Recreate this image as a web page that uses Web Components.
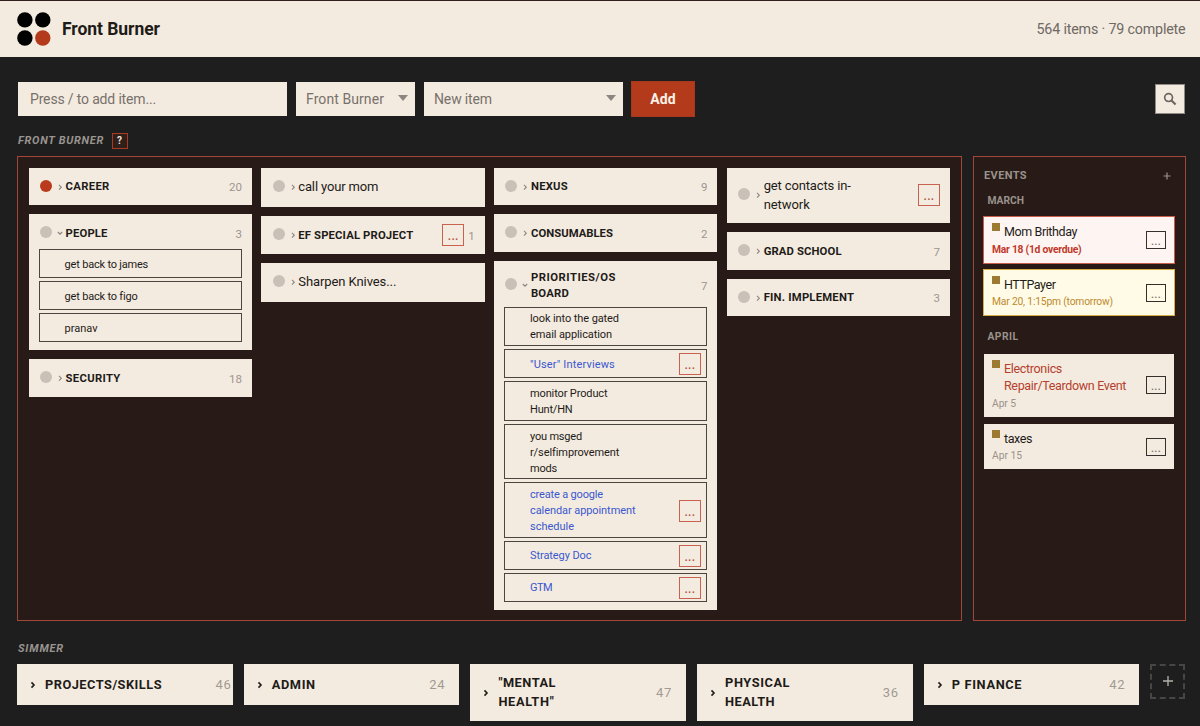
<!DOCTYPE html>
<html lang="en">
<head>
<meta charset="utf-8">
<title>Front Burner</title>
<style>
  body {
    margin: 0;
    height: 726px;
    overflow: hidden;
    background: #1e1e1e;
    color: #1e1b18;
    font-family: Roboto, "Liberation Sans", sans-serif;
    --cream: #f4ebe0;
    --red: #b33b1b;
    --line: #a3463a;
  }
</style>
</head>
<body>
<burner-app></burner-app>

<script>
// Text run tracked out to a given width
class TrackedText extends HTMLElement {
  connectedCallback() {
    if (this.shadowRoot) return;
    this.attachShadow({ mode: 'open' }).innerHTML =
      '<style>:host { display: inline-block; white-space: nowrap; vertical-align: top; }</style><slot></slot>';
    const width = Number(this.getAttribute('w'));
    const count = this.textContent.length;
    const natural = this.getBoundingClientRect().width;
    if (width && natural) {
      this.style.letterSpacing = `${((width - natural) / count).toFixed(3)}px`;
    }
  }
}

class MoreButton extends HTMLElement {
  connectedCallback() {
    this.attachShadow({ mode: 'open' }).innerHTML = `
      <style>
        :host {
          display: block; flex: none; box-sizing: border-box;
          width: 22px; height: 22px; margin: -4px 0 -3px;
          border: 1px solid #c9614f; color: #b5503c;
          font-size: 12px; line-height: 23px; text-align: center;
          font-weight: 500; letter-spacing: 0.3px;
        }
        :host([dark]) {
          width: 20px; height: 18px; border-color: #33302c; color: #77716b;
          line-height: 19px; font-size: 11px;
        }
      </style>...`;
  }
}

class BurnerHeader extends HTMLElement {
  connectedCallback() {
    this.attachShadow({ mode: 'open' }).innerHTML = `
      <style>
        :host {
          display: flex; align-items: center; box-sizing: border-box; height: 57px;
          padding: 0 14.5px 0 17px; background: var(--cream);
          border-top: 1px solid #32201f;
        }
        svg { display: block; width: 34px; height: 34px; }
        h1 { flex: 1; margin: 0 0 0 11px; font-size: 17.5px; line-height: 22px; font-weight: 700; }
        .stats { font-size: 14.3px; line-height: 20px; color: #6d6964; }
      </style>
      <svg viewBox="0 0 34 34">
        <circle cx="7.9" cy="7.9" r="7.7"/><circle cx="25.8" cy="7.9" r="7.7"/>
        <circle cx="7.9" cy="26" r="7.7"/><circle cx="25.8" cy="26" r="7.7" fill="#b33b1b"/>
      </svg>
      <h1><tracked-text w="98">Front Burner</tracked-text></h1>
      <div class="stats"><tracked-text w="149">564 items · 79 complete</tracked-text></div>`;
  }
}

class BurnerToolbar extends HTMLElement {
  connectedCallback() {
    this.attachShadow({ mode: 'open' }).innerHTML = `
      <style>
        :host {
          display: flex; align-items: center; height: 36px; gap: 9px;
          margin: 24px 15px 0 18px; font-size: 14px; line-height: 20px; color: #77716b;
        }
        .field {
          display: flex; align-items: center; justify-content: space-between;
          box-sizing: border-box; height: 34px; padding: 0 7px 0 10px; background: var(--cream);
        }
        .field.entry { width: 269px; padding-left: 12px; }
        .field.zone { width: 119px; }
        .field.kind { width: 199px; }
        .arrow { border: 5px solid transparent; border-top: 6px solid #8b8681; border-bottom: 0; margin-top: -2px; }
        button {
          width: 64px; height: 36px; margin-left: -1px; padding: 0; border: 1px solid #a8381b;
          background: var(--red); color: #fbf1e6; font: inherit; font-weight: 700;
        }
        .search {
          display: grid; place-items: center; box-sizing: border-box;
          width: 30px; height: 30px; margin-left: auto;
          background: var(--cream); border: 1px solid #918b85;
        }
      </style>
      <div class="field entry"><tracked-text w="126">Press / to add item...</tracked-text></div>
      <div class="field zone"><tracked-text w="78">Front Burner</tracked-text><span class="arrow"></span></div>
      <div class="field kind"><tracked-text w="58">New item</tracked-text><span class="arrow"></span></div>
      <button><tracked-text w="25.5">Add</tracked-text></button>
      <div class="search">
        <svg width="14" height="14" viewBox="0 0 14 14" fill="none" stroke="#6b6661">
          <circle cx="5.6" cy="5.6" r="3.9" stroke-width="1.7"/>
          <path d="M8.5 8.5 12.6 12.6" stroke-width="2.1"/>
        </svg>
      </div>`;
  }
}

class SectionLabel extends HTMLElement {
  connectedCallback() {
    this.attachShadow({ mode: 'open' }).innerHTML = `
      <style>
        :host {
          display: flex; align-items: center; gap: 7.5px; height: 16px; margin-left: 18px;
          font-size: 11px; line-height: 16px; font-weight: 700; font-style: italic; color: #99948f;
        }
        .help {
          box-sizing: border-box; width: 16px; height: 16px; border: 1px solid #a93c20;
          background: #30201b; color: #eee4da; font-style: normal; font-size: 10px;
          line-height: 14px; text-align: center;
        }
      </style>
      <slot></slot>${this.hasAttribute('help') ? '<span class="help">?</span>' : ''}`;
  }
}

class BurnerCard extends HTMLElement {
  connectedCallback() {
    const count = this.getAttribute('count') || '';
    const chevron = this.hasAttribute('open') ? 'M0.8 2 3 4.2 5.2 2' : 'M2 0.8 4.3 3.2 2 5.6';
    this.attachShadow({ mode: 'open' }).innerHTML = `
      <style>
        :host { display: block; background: var(--cream); }
        .head {
          display: flex; align-items: center; box-sizing: border-box; min-height: 37.3px;
          padding: 9px 10px 7.3px 11.5px; font-size: 11.3px; line-height: 16px; font-weight: 700;
        }
        :host([task]) .head {
          min-height: 39.3px; padding-top: 9.3px; padding-bottom: 9.3px;
          font-size: 13px; line-height: 18.4px; font-weight: 400;
        }
        .dot { flex: none; width: 12px; height: 12px; margin-top: -3px; border-radius: 50%; background: #c9c1b8; }
        :host([hot]) .dot { background: #b93a1c; }
        svg { flex: none; width: 6px; height: 7px; margin: 0 2.5px 0 5px; fill: none; stroke: #8b8580; stroke-width: 1.1; }
        .title { flex: 1; }
        .count { margin-left: 4px; color: #9c9690; font-size: 11.5px; font-weight: 400; }
        .items { display: flex; flex-direction: column; gap: 3px; margin-top: -2.4px; padding: 0 10px 8px; }
      </style>
      <div class="head">
        <span class="dot"></span>
        <svg viewBox="0 0 6 7"><path d="${chevron}"/></svg>
        <span class="title"><slot name="title"></slot></span>
        <slot name="more"></slot>
        ${count && `<span class="count">${count}</span>`}
      </div>
      ${this.hasAttribute('open') ? '<div class="items"><slot></slot></div>' : ''}`;
  }
}

class BurnerItem extends HTMLElement {
  connectedCallback() {
    this.attachShadow({ mode: 'open' }).innerHTML = `
      <style>
        :host {
          display: flex; align-items: center; justify-content: space-between; box-sizing: border-box;
          min-height: 29px; padding: 3.7px 5.5px 1.9px 25px; border: 1px solid #4b4540;
          font-size: 11px; line-height: 16px;
        }
        :host([link]) { color: #3a58cf; }
      </style>
      <span><slot></slot></span>${this.hasAttribute('more') ? '<more-button></more-button>' : ''}`;
  }
}

class EventCard extends HTMLElement {
  connectedCallback() {
    this.attachShadow({ mode: 'open' }).innerHTML = `
      <style>
        :host {
          display: flex; align-items: center; justify-content: space-between;
          margin-bottom: 7px; padding: 6px 8px 5px; background: var(--cream);
          --date: #99928b;
        }
        :host([state="overdue"]) { background: #fef5f3; box-shadow: 0 0 0 1px #c95d4c; --date: #c0392b; }
        :host([state="soon"]) { background: #fffbe6; box-shadow: 0 0 0 1px #d8ae45; --date: #bd8a2e; }
        :host([accent]) { color: #b5402c; }
        .title { display: flex; font-size: 12.5px; line-height: 17.5px; }
        .title i { width: 8px; height: 8px; margin: 0 4px 0 0; background: #9c7a31; }
        .date { font-size: 10.3px; line-height: 16px; margin-top: 1px; color: var(--date); }
        :host([state="overdue"]) .date { font-weight: 700; }
      </style>
      <div>
        <div class="title"><i></i><span><slot></slot></span></div>
        <div class="date"><slot name="date"></slot></div>
      </div>
      <more-button dark></more-button>`;
  }
}

class EventsPanel extends HTMLElement {
  connectedCallback() {
    this.attachShadow({ mode: 'open' }).innerHTML = `
      <style>
        :host {
          display: block; box-sizing: border-box; padding: 10px 11px 10px 10px;
          border: 1px solid var(--line); background: #281a16;
        }
        header { display: flex; justify-content: space-between; font-size: 11px; line-height: 18px; font-weight: 700; color: #99928c; }
        header svg { margin: 5px 3.5px 0 0; }
      </style>
      <header><tracked-text w="43">EVENTS</tracked-text>
        <svg width="8" height="8" viewBox="0 0 8 8" stroke="#99928c" stroke-width="1.2"><path d="M4 .5v7M.5 4h7"/></svg>
      </header>
      <slot></slot>`;
  }
}

class MonthLabel extends HTMLElement {
  connectedCallback() {
    this.attachShadow({ mode: 'open' }).innerHTML = `
      <style>
        :host { display: block; height: 25.5px; margin-top: 6.5px; padding-left: 3.5px; font-size: 10.3px; line-height: 17px; font-weight: 700; color: #99928c; }
        :host([next]) { margin-top: 13px; }
      </style><slot></slot>`;
  }
}

class SimmerCard extends HTMLElement {
  connectedCallback() {
    this.attachShadow({ mode: 'open' }).innerHTML = `
      <style>
        :host {
          display: flex; align-items: center; box-sizing: border-box; width: 215.6px; min-height: 41px;
          padding: 9.5px 14px 9.5px 13px; background: var(--cream); font-size: 12.8px; line-height: 19px; font-weight: 700;
        }
        :host([tight]) { padding-right: 1px; }
        svg { width: 6px; height: 8px; margin: 1px 9px 0 0; fill: none; stroke: #1e1b18; stroke-width: 1.6; }
        .title { flex: 1; }
        .count { font-size: 13px; font-weight: 400; color: #a19a93; }
      </style>
      <svg viewBox="0 0 6 8"><path d="M1.5 1.4 4 4 1.5 6.6"/></svg>
      <span class="title"><slot></slot></span>
      <span class="count"><tracked-text w="16">${this.getAttribute('count')}</tracked-text></span>`;
  }
}

class BurnerApp extends HTMLElement {
  connectedCallback() {
    this.attachShadow({ mode: 'open' }).innerHTML = `
      <style>
        :host { display: block; }
        .label { margin-top: 16px; }
        .label.low { margin-top: 20.6px; }
        main {
          display: grid; grid-template-columns: 944.5px 213px; grid-template-rows: 464.2px;
          gap: 11.5px; height: 464.2px; margin: 7.4px 0 0 17px;
        }
        .board {
          display: grid; grid-template-columns: repeat(4, 223.4px); gap: 9.3px; align-items: start;
          box-sizing: border-box; padding: 10.6px; border: 1px solid var(--line); background: #281a16;
        }
        .column { display: flex; flex-direction: column; gap: 9.1px; }
        .simmer { display: flex; align-items: flex-start; gap: 11.1px; margin: 6.8px 0 0 17px; }
        .add {
          display: grid; place-items: center; box-sizing: border-box; width: 35px; height: 35px;
          border: 2px dashed #484645;
        }
      </style>
      <burner-header></burner-header>
      <burner-toolbar></burner-toolbar>
      <section-label class="label" help><tracked-text w="86">FRONT BURNER</tracked-text></section-label>
      <main>
        <div class="board">
          <div class="column">
            <burner-card hot count="20"><tracked-text slot="title" w="44">CAREER</tracked-text></burner-card>
            <burner-card open count="3"><tracked-text slot="title" w="42">PEOPLE</tracked-text>
              <burner-item><tracked-text w="83.5">get back to james</tracked-text></burner-item>
              <burner-item><tracked-text w="72.5">get back to figo</tracked-text></burner-item>
              <burner-item><tracked-text w="33">pranav</tracked-text></burner-item>
            </burner-card>
            <burner-card count="18"><tracked-text slot="title" w="55">SECURITY</tracked-text></burner-card>
          </div>
          <div class="column">
            <burner-card task><tracked-text slot="title" w="80">call your mom</tracked-text></burner-card>
            <burner-card count="1"><tracked-text slot="title" w="115">EF SPECIAL PROJECT</tracked-text><more-button slot="more"></more-button></burner-card>
            <burner-card task><tracked-text slot="title" w="98">Sharpen Knives...</tracked-text></burner-card>
          </div>
          <div class="column">
            <burner-card count="9"><tracked-text slot="title" w="37">NEXUS</tracked-text></burner-card>
            <burner-card count="2"><tracked-text slot="title" w="82">CONSUMABLES</tracked-text></burner-card>
            <burner-card open count="7"><span slot="title"><tracked-text w="85">PRIORITIES/OS</tracked-text><br><tracked-text w="38">BOARD</tracked-text></span>
              <burner-item><tracked-text w="89">look into the gated</tracked-text><br><tracked-text w="82">email application</tracked-text></burner-item>
              <burner-item link more><tracked-text w="85">"User" Interviews</tracked-text></burner-item>
              <burner-item><tracked-text w="77.5">monitor Product</tracked-text><br><tracked-text w="42.5">Hunt/HN</tracked-text></burner-item>
              <burner-item><tracked-text w="52">you msged</tracked-text><br><tracked-text w="89">r/selfimprovement</tracked-text><br><tracked-text w="27">mods</tracked-text></burner-item>
              <burner-item link more><tracked-text w="73">create a google</tracked-text><br><tracked-text w="105.5">calendar appointment</tracked-text><br><tracked-text w="44">schedule</tracked-text></burner-item>
              <burner-item link more><tracked-text w="61.5">Strategy Doc</tracked-text></burner-item>
              <burner-item link more><tracked-text w="22">GTM</tracked-text></burner-item>
            </burner-card>
          </div>
          <div class="column">
            <burner-card task><span slot="title"><tracked-text w="87">get contacts in-</tracked-text><br><tracked-text w="46">network</tracked-text></span><more-button slot="more"></more-button></burner-card>
            <burner-card count="7"><tracked-text slot="title" w="78">GRAD SCHOOL</tracked-text></burner-card>
            <burner-card count="3"><tracked-text slot="title" w="90.5">FIN. IMPLEMENT</tracked-text></burner-card>
          </div>
        </div>
        <events-panel>
          <month-label><tracked-text w="36.5">MARCH</tracked-text></month-label>
          <event-card state="overdue"><tracked-text w="73">Mom Brithday</tracked-text><tracked-text slot="date" w="89.5">Mar 18 (1d overdue)</tracked-text></event-card>
          <event-card state="soon"><tracked-text w="51.5">HTTPayer</tracked-text><tracked-text slot="date" w="121">Mar 20, 1:15pm (tomorrow)</tracked-text></event-card>
          <month-label next><tracked-text w="31">APRIL</tracked-text></month-label>
          <event-card accent><tracked-text w="58">Electronics</tracked-text><br><tracked-text w="122">Repair/Teardown Event</tracked-text><tracked-text slot="date" w="24">Apr 5</tracked-text></event-card>
          <event-card><tracked-text w="28">taxes</tracked-text><tracked-text slot="date" w="30">Apr 15</tracked-text></event-card>
        </events-panel>
      </main>
      <section-label class="label low"><tracked-text w="46">SIMMER</tracked-text></section-label>
      <div class="simmer">
        <simmer-card tight count="46"><tracked-text w="117">PROJECTS/SKILLS</tracked-text></simmer-card>
        <simmer-card count="24"><tracked-text w="44">ADMIN</tracked-text></simmer-card>
        <simmer-card count="47"><tracked-text w="57.5">"MENTAL</tracked-text><br><tracked-text w="56">HEALTH"</tracked-text></simmer-card>
        <simmer-card count="36"><tracked-text w="65">PHYSICAL</tracked-text><br><tracked-text w="50">HEALTH</tracked-text></simmer-card>
        <simmer-card count="42"><tracked-text w="70.5">P FINANCE</tracked-text></simmer-card>
        <div class="add"><svg width="10" height="10" viewBox="0 0 10 10" stroke="#b7b2ad" stroke-width="1.3"><path d="M5 0v10M0 5h10"/></svg></div>
      </div>`;
  }
}

customElements.define('more-button', MoreButton);
customElements.define('burner-header', BurnerHeader);
customElements.define('burner-toolbar', BurnerToolbar);
customElements.define('section-label', SectionLabel);
customElements.define('burner-card', BurnerCard);
customElements.define('burner-item', BurnerItem);
customElements.define('event-card', EventCard);
customElements.define('events-panel', EventsPanel);
customElements.define('month-label', MonthLabel);
customElements.define('simmer-card', SimmerCard);
customElements.define('burner-app', BurnerApp);
// Measures its own text, so it is registered once every container has its styles
customElements.define('tracked-text', TrackedText);
</script>
</body>
</html>
